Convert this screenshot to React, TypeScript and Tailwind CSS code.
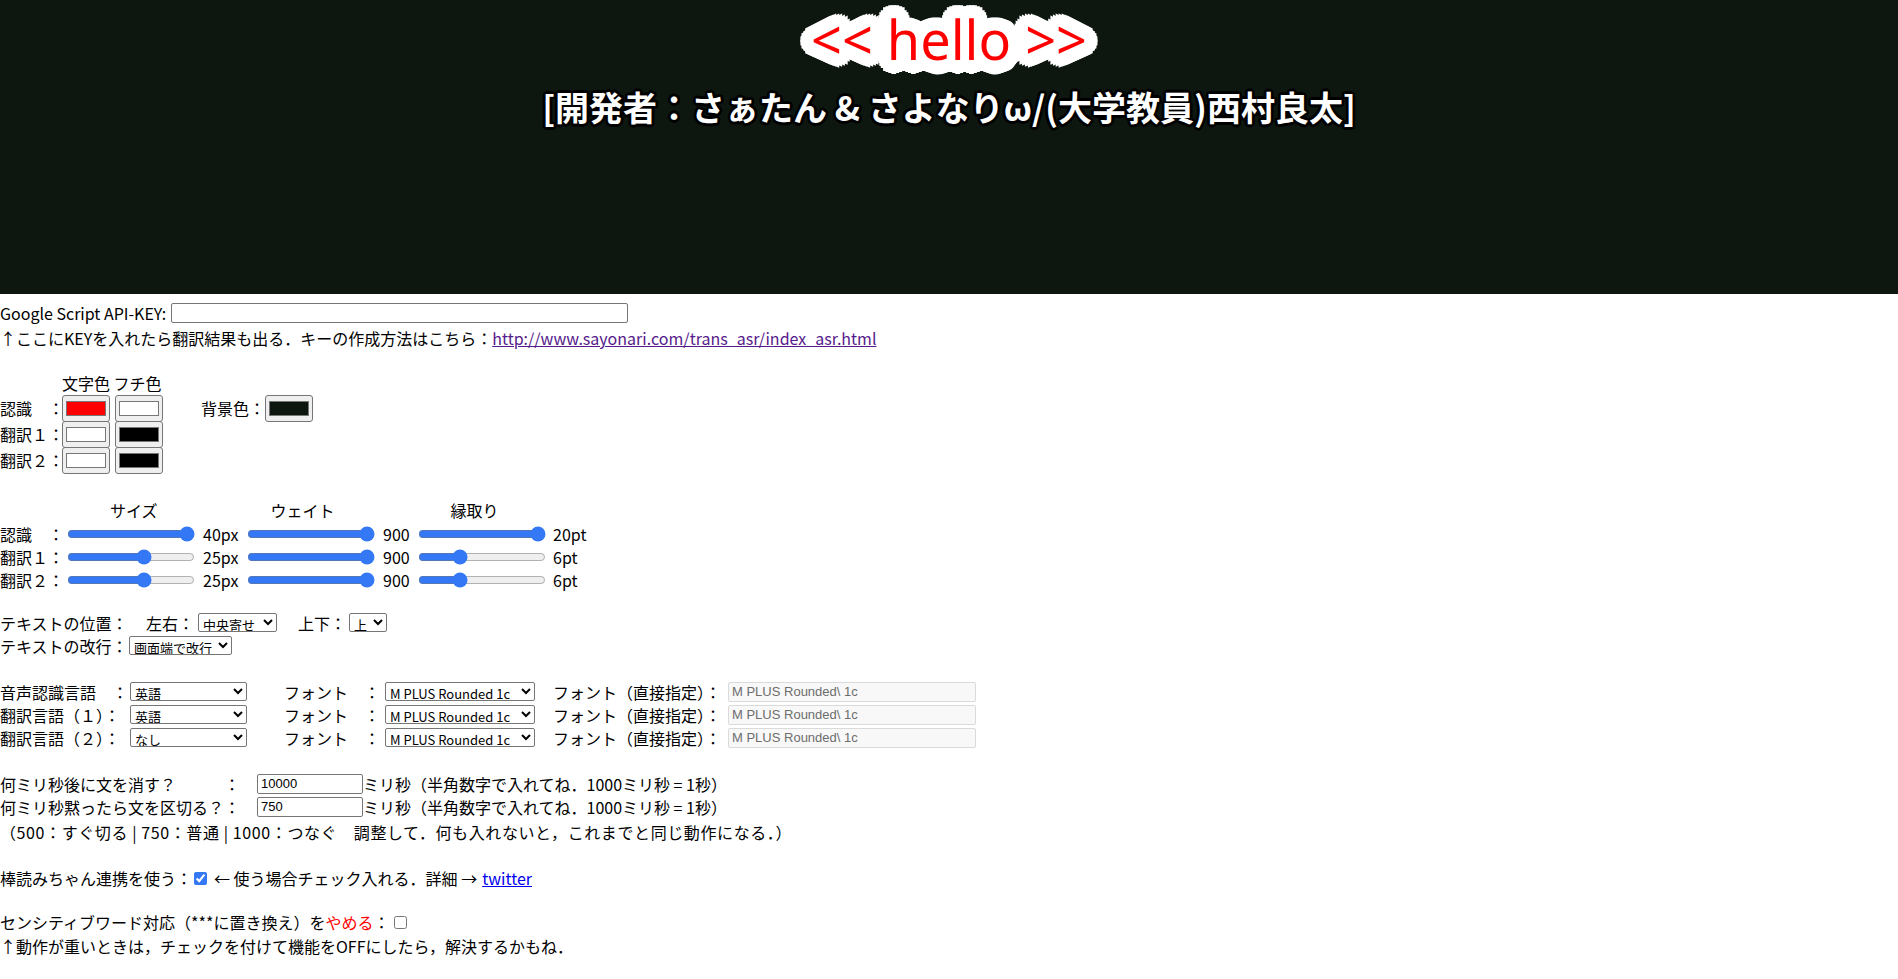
import React from 'react';

// builds a round outline out of many text-shadows
const ring = (color: string, radii: number[], steps: number) =>
  radii
    .flatMap((r) =>
      Array.from({ length: steps }, (_, i) => {
        const a = (i / steps) * Math.PI * 2;
        return `${(r * Math.cos(a)).toFixed(2)}px ${(r * Math.sin(a)).toFixed(2)}px 0 ${color}`;
      })
    )
    .join(', ');

const helloShadow = ring('#ffffff', [3, 6, 9, 11.5, 13.5], 28);
const subShadow = ring('#000000', [1.3, 2.6], 16);

function ColorBox({ swatch }: { swatch: string }) {
  return (
    <span className="inline-flex h-[27px] w-[48px] shrink-0 items-center justify-center rounded-[3px] border border-[#767676] bg-[#efefef]">
      <span className={`h-[15px] w-[40px] border border-[#777777] ${swatch}`} />
    </span>
  );
}

const selectCls =
  "h-[19px] rounded-[2px] border border-[#767676] bg-white text-[13px] leading-none text-black font-['Noto_Sans_CJK_JP',sans-serif]";

const colorRows = [
  { label: '認識　：', text: 'bg-[#ff0000]', edge: 'bg-white' },
  { label: '翻訳１：', text: 'bg-white', edge: 'bg-black' },
  { label: '翻訳２：', text: 'bg-white', edge: 'bg-black' },
];

const sliderRows = [
  { label: '認識　：', size: 40, sizeText: '40px', stroke: 20, strokeText: '20pt' },
  { label: '翻訳１：', size: 25, sizeText: '25px', stroke: 6, strokeText: '6pt' },
  { label: '翻訳２：', size: 25, sizeText: '25px', stroke: 6, strokeText: '6pt' },
];

const langRows = [
  { label: '音声認識言語　：', lang: '英語' },
  { label: '翻訳言語（１）：', lang: '英語' },
  { label: '翻訳言語（２）：', lang: 'なし' },
];

export default function App() {
  return (
    <div className="min-h-screen bg-white text-[16px] text-black font-['Noto_Sans_CJK_JP',sans-serif]">
      {/* preview header */}
      <div className="flex h-[294px] flex-col items-center bg-[#0d160f] pt-[12px]">
        <div
          className="text-[54px] leading-none text-[#ff0000] font-['Noto_Sans','Noto_Sans_CJK_JP',sans-serif]"
          style={{ textShadow: helloShadow }}
        >
          {'<< hello >>'}
        </div>
        <div
          className="mt-[24px] text-[34px] font-bold leading-none text-white"
          style={{ textShadow: subShadow }}
        >
          [開発者：さぁたん &amp; さよなりω/(大学教員)西村良太]
        </div>
      </div>

      <div className="whitespace-nowrap pt-[6px]">
        {/* API key */}
        <div className="flex h-[26px] items-center">
          <span>Google Script API-KEY:</span>
          <input
            type="text"
            className="ml-[5px] h-[20px] w-[457px] rounded-[2px] border border-[#767676] bg-white px-[2px] text-[13px] outline-none"
          />
        </div>
        <div className="flex h-[24px] items-center">
          <span>↑ここにKEYを入れたら翻訳結果も出る．キーの作成方法はこちら：</span>
          <a href="#" className="text-[#551a8b] underline">
            http://www.sayonari.com/trans_asr/index_asr.html
          </a>
        </div>

        {/* colours */}
        <div className="mt-[21px] flex h-[24px] items-center pl-[62px]">文字色 フチ色</div>
        {colorRows.map((row, i) => (
          <div key={row.label} className="flex h-[26px] items-center">
            <span className="w-[62px] shrink-0">{row.label}</span>
            <ColorBox swatch={row.text} />
            <span className="ml-[5px]">
              <ColorBox swatch={row.edge} />
            </span>
            {i === 0 && (
              <>
                <span className="ml-[38px]">背景色：</span>
                <ColorBox swatch="bg-[#0d160f]" />
              </>
            )}
          </div>
        ))}

        {/* sliders */}
        <div className="mt-[25px] flex h-[24px] items-center">
          <span className="ml-[110px]">サイズ</span>
          <span className="ml-[113px]">ウェイト</span>
          <span className="ml-[116px]">縁取り</span>
        </div>
        {sliderRows.map((row) => (
          <div key={row.label} className="flex h-[23px] items-center">
            <span className="w-[67px] shrink-0">{row.label}</span>
            <input type="range" min={1} max={40} defaultValue={row.size} className="w-[128px] accent-[#3478f6]" />
            <span className="ml-[8px] w-[44px]">{row.sizeText}</span>
            <input type="range" min={100} max={900} defaultValue={900} className="w-[128px] accent-[#3478f6]" />
            <span className="ml-[8px] w-[35px]">900</span>
            <input type="range" min={0} max={20} defaultValue={row.stroke} className="w-[128px] accent-[#3478f6]" />
            <span className="ml-[7px]">{row.strokeText}</span>
          </div>
        ))}

        {/* text position */}
        <div className="mt-[20px] flex h-[23px] items-center">
          <span className="w-[146px] shrink-0">テキストの位置：</span>
          <span>左右：</span>
          <select defaultValue="center" className={`${selectCls} ml-[4px] w-[79px]`}>
            <option value="left">左寄せ</option>
            <option value="center">中央寄せ</option>
            <option value="right">右寄せ</option>
          </select>
          <span className="ml-[21px]">上下：</span>
          <select defaultValue="top" className={`${selectCls} ml-[3px] w-[38px]`}>
            <option value="top">上</option>
            <option value="bottom">下</option>
          </select>
        </div>
        <div className="flex h-[23px] items-center">
          <span className="w-[129px] shrink-0">テキストの改行：</span>
          <select defaultValue="wrap" className={`${selectCls} w-[103px]`}>
            <option value="wrap">画面端で改行</option>
            <option value="nowrap">改行しない</option>
          </select>
        </div>

        {/* languages and fonts */}
        <div className="mt-[23px]">
          {langRows.map((row) => (
            <div key={row.label} className="flex h-[23px] items-center">
              <span className="w-[130px] shrink-0">{row.label}</span>
              <select defaultValue={row.lang} className={`${selectCls} w-[117px]`}>
                <option value="英語">英語</option>
                <option value="日本語">日本語</option>
                <option value="なし">なし</option>
              </select>
              <span className="ml-[37px] w-[80px] shrink-0">フォント</span>
              <span className="w-[20px] shrink-0">：</span>
              <select defaultValue="mplus" className={`${selectCls} ml-[1px] w-[150px]`}>
                <option value="mplus">M PLUS Rounded 1c</option>
                <option value="noto">Noto Sans JP</option>
              </select>
              <span className="ml-[18px] w-[175px] shrink-0">フォント（直接指定）：</span>
              <input
                type="text"
                disabled
                defaultValue="M PLUS Rounded\ 1c"
                className="h-[20px] w-[248px] rounded-[2px] border border-[#dadada] bg-[#f8f8f8] px-[3px] text-[13px] text-[#6d6d6d] font-['Liberation_Sans',sans-serif]"
              />
            </div>
          ))}
        </div>

        {/* timing */}
        <div className="mt-[23px] flex h-[23px] items-center">
          <span className="w-[224px] shrink-0">何ミリ秒後に文を消す？</span>
          <span className="w-[16px] shrink-0">：</span>
          <input
            type="text"
            defaultValue="10000"
            className="ml-[17px] h-[20px] w-[106px] rounded-[2px] border border-[#767676] bg-white px-[3px] text-[13px] font-['Liberation_Sans',sans-serif] outline-none"
          />
          <span>ミリ秒（半角数字で入れてね．1000ミリ秒 = 1秒）</span>
        </div>
        <div className="flex h-[23px] items-center">
          <span className="w-[224px] shrink-0">何ミリ秒黙ったら文を区切る？</span>
          <span className="w-[16px] shrink-0">：</span>
          <input
            type="text"
            defaultValue="750"
            className="ml-[17px] h-[20px] w-[106px] rounded-[2px] border border-[#767676] bg-white px-[3px] text-[13px] font-['Liberation_Sans',sans-serif] outline-none"
          />
          <span>ミリ秒（半角数字で入れてね．1000ミリ秒 = 1秒）</span>
        </div>
        <div className="mt-[2px] flex h-[24px] items-center tracking-[0.6px]">
          （500：すぐ切る | 750：普通 | 1000：つなぐ　調整して．何も入れないと，これまでと同じ動作になる．）
        </div>

        {/* bouyomi-chan */}
        <div className="mt-[22px] flex h-[24px] items-center">
          <span>棒読みちゃん連携を使う：</span>
          <input type="checkbox" defaultChecked className="ml-[2px] mr-[3px] h-[13px] w-[13px] accent-[#3478f6]" />
          <span className="ml-[4px]">← 使う場合チェック入れる．詳細 →</span>
          <a href="#" className="ml-[5px] text-[#0000ee] underline">
            twitter
          </a>
        </div>

        {/* sensitive words */}
        <div className="mt-[20px] flex h-[24px] items-center">
          <span>センシティブワード対応（***に置き換え）を</span>
          <span className="text-[#ff0000]">やめる</span>
          <span>：</span>
          <input type="checkbox" className="ml-[4px] h-[13px] w-[13px]" />
        </div>
        <div className="flex h-[24px] items-center">
          ↑動作が重いときは，チェックを付けて機能をOFFにしたら，解決するかもね．
        </div>
      </div>
    </div>
  );
}
